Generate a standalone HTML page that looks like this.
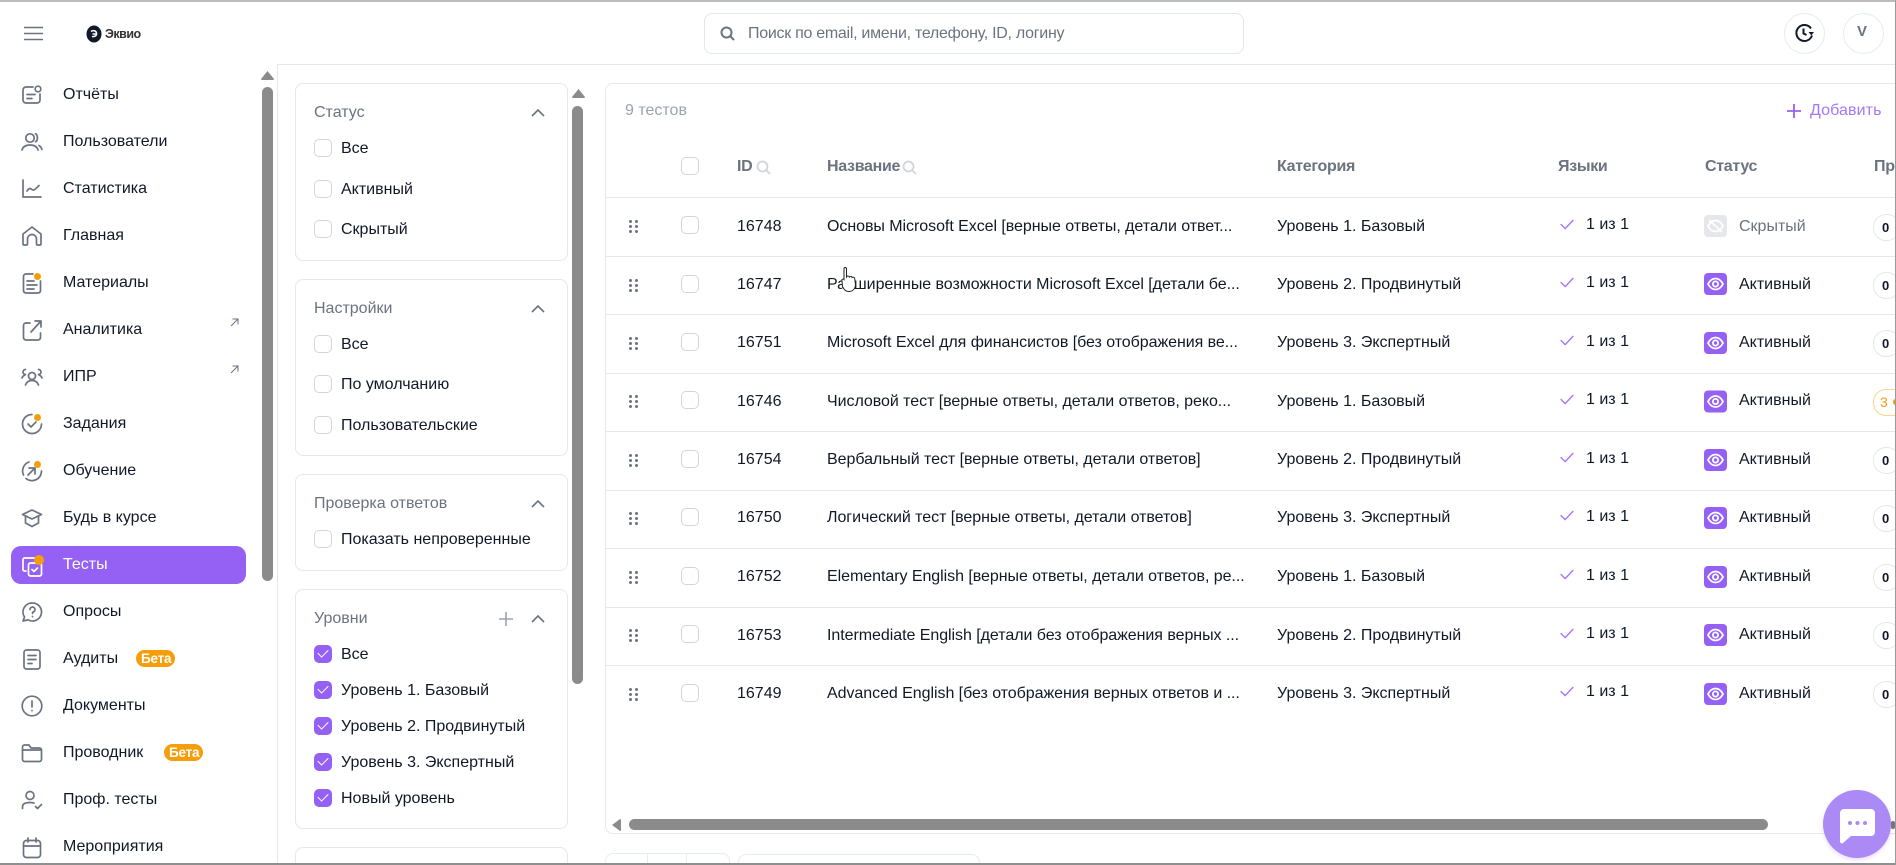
<!DOCTYPE html>
<html lang="ru"><head><meta charset="utf-8"><title>Тесты</title>
<style>
html,body{margin:0;padding:0;background:#fff;width:1896px;height:865px;overflow:hidden}
#r{position:relative;width:1896px;height:865px;overflow:hidden;font-family:"Liberation Sans",sans-serif;font-size:16px;color:#111827}
.a,.t,.cb,.ck,.p,svg{position:absolute}
.t{white-space:nowrap;line-height:20px;margin-top:1px}
.cb,.ck{width:16px;height:16px;border:1px solid #d4d4e0;border-radius:5px;background:#fff;margin-top:-1px}
.ck{background:#9561f5;border-color:#9561f5}
.ck:after{content:"";position:absolute;left:3px;top:3px;width:9px;height:5px;border-left:1.6px solid #fff;border-bottom:1.6px solid #fff;transform:rotate(-45deg)}
.p{left:295px;width:271px;border:1px solid #e5e7eb;border-radius:8px;background:#fff}
.g{color:#6b7280}
.h{color:#6b7280;font-weight:bold;letter-spacing:-.3px}
.ln{position:absolute;left:606px;width:1290px;height:1px;background:#e5e7eb}
.sb{position:absolute;background:#8b8b8b;border-radius:6px}
.beta{position:absolute;height:17px;line-height:17px;background:#f59e0b;color:#fff;font-weight:bold;font-size:13.5px;border-radius:9px;padding:0 5px;width:29px;text-align:center;letter-spacing:-.2px}
.ic{fill:none;stroke:#6b7280;stroke-width:1.7;stroke-linecap:round;stroke-linejoin:round}
.dot{position:absolute;width:7px;height:7px;background:#f59e0b;border-radius:50%}
.pill{position:absolute;left:1873px;width:25px;height:25px;border:1px solid #e5e7eb;border-radius:13px;background:#fff;font-size:13px;font-weight:bold;line-height:25px;text-indent:8px;box-sizing:content-box}
.nm{letter-spacing:-.05px}
.e{margin-top:-1px}
</style></head><body><div id="r">
<svg width="0" height="0" style="position:absolute"><defs>
<symbol id="eye" viewBox="0 0 23 22"><rect width="23" height="22" rx="4" fill="#9561f5"/><path d="M4 11c2-3.800 4.500-5.500 7.500-5.500S17 7.200 19 11c-2 3.800-4.500 5.500-7.500 5.500S6 14.800 4 11z" fill="none" stroke="#fff" stroke-width="1.800"/><circle cx="11.500" cy="11" r="2.600" fill="none" stroke="#fff" stroke-width="1.800"/></symbol>
<symbol id="chk" viewBox="0 0 15 12"><path d="M1 6l4.500 4.500L14 1.500" fill="none" stroke="#a478f5" stroke-width="1.500" stroke-linecap="round" stroke-linejoin="round"/></symbol>
<symbol id="dr" viewBox="0 0 9 13"><g fill="#6b7280"><circle cx="1.500" cy="1.500" r="1.500"/><circle cx="7.500" cy="1.500" r="1.500"/><circle cx="1.500" cy="6.500" r="1.500"/><circle cx="7.500" cy="6.500" r="1.500"/><circle cx="1.500" cy="11.500" r="1.500"/><circle cx="7.500" cy="11.500" r="1.500"/></g></symbol>
<symbol id="up" viewBox="0 0 14 8"><path d="M1 7l6-6 6 6" fill="none" stroke="#6b7280" stroke-width="1.600"/></symbol>
</defs></svg>

<div class="a" style="left:0;top:0;width:1896px;height:2px;background:#bdbdbd"></div>
<div class="a" style="left:277px;top:64px;width:1619px;height:1px;background:#e5e7eb"></div>
<div class="a" style="left:277px;top:64px;width:1px;height:800px;background:#e5e7eb"></div>

<!-- header -->
<svg style="left:24px;top:26px" width="19" height="15" viewBox="0 0 19 15"><path d="M0 1.500h19M0 7.500h19M0 13.500h19" stroke="#6b7280" stroke-width="1.600"/></svg>
<svg style="left:86px;top:25px" width="16" height="18" viewBox="0 0 16 18"><ellipse cx="8" cy="9" rx="7.500" ry="8.500" fill="#111827"/><path d="M5 6.500c2-1.500 5-1 5.500 1.500S9 12 6 11.500M6.500 9h3.500" fill="none" stroke="#fff" stroke-width="1.500"/></svg>
<div class="t" style="left:105px;top:23px;font-size:12.500px;font-weight:bold;letter-spacing:-.5px;color:#333">Эквио</div>
<div class="a" style="left:704px;top:13px;width:538px;height:39px;border:1px solid #e0e7ee;border-radius:8px"></div>
<svg style="left:720px;top:26px" width="15" height="15" viewBox="0 0 15 15"><circle cx="6.500" cy="6.500" r="5" fill="none" stroke="#6b7280" stroke-width="2"/><path d="M10 10l4 4" stroke="#6b7280" stroke-width="2"/></svg>
<div class="t g" style="left:748px;top:23px;letter-spacing:-.28px">Поиск по email, имени, телефону, ID, логину</div>
<div class="a" style="left:1784px;top:13px;width:39px;height:39px;border:1px solid #e5edf0;border-radius:50%"></div>
<svg style="left:1794px;top:23px" width="21" height="20" viewBox="0 0 21 20"><path d="M18 12.500A8 8 0 1 1 17 5.500" fill="none" stroke="#111827" stroke-width="2"/><path d="M9.500 5.500v5l3 1.500" fill="none" stroke="#111827" stroke-width="2"/><path d="M14.500 9h5.500l-2.700 3.500z" fill="#111827"/></svg>
<div class="a" style="left:1843px;top:13px;width:39px;height:39px;border:1px solid #e5edf0;border-radius:50%"></div>
<div class="t g" style="left:1857px;top:21px;font-weight:bold;font-size:15px">V</div>

<!-- sidebar -->
<div class="a" style="left:11px;top:546px;width:235px;height:38px;background:#9561f5;border-radius:10px"></div>
<div class="t" style="left:63px;top:84px">Отчёты</div>
<div class="t" style="left:63px;top:131px">Пользователи</div>
<div class="t" style="left:63px;top:178px">Статистика</div>
<div class="t" style="left:63px;top:225px">Главная</div>
<div class="t" style="left:63px;top:272px">Материалы</div>
<div class="t" style="left:63px;top:319px">Аналитика</div>
<div class="t" style="left:63px;top:366px">ИПР</div>
<div class="t" style="left:63px;top:413px">Задания</div>
<div class="t" style="left:63px;top:460px">Обучение</div>
<div class="t" style="left:63px;top:507px">Будь в курсе</div>
<div class="t" style="left:63px;top:554px;color:#fff">Тесты</div>
<div class="t" style="left:63px;top:601px">Опросы</div>
<div class="t" style="left:63px;top:648px">Аудиты</div>
<div class="beta" style="left:136px;top:650px">Бета</div>
<div class="t" style="left:63px;top:695px">Документы</div>
<div class="t" style="left:63px;top:742px">Проводник</div>
<div class="beta" style="left:164px;top:744px">Бета</div>
<div class="t" style="left:63px;top:789px">Проф. тесты</div>
<div class="t" style="left:63px;top:836px">Мероприятия</div>

<svg class="ic" style="left:21px;top:84px" width="22" height="22" viewBox="0 0 22 22"><path d="M12 3H5a3 3 0 0 0-3 3v10a3 3 0 0 0 3 3h11a3 3 0 0 0 3-3v-6"/><circle cx="17" cy="5" r="2.800"/><path d="M6 10.500h8M6 14.500h5"/></svg>
<svg class="ic" style="left:21px;top:132px" width="22" height="20" viewBox="0 0 22 20"><circle cx="9" cy="6" r="4.200"/><path d="M1 18c1-3.500 4-5 8-5s7 1.500 8 5M14.500 1.800c2.500 1 2.500 7 0 8M18 13.500c1.500.8 2.500 2.500 3 4"/></svg>
<svg class="ic" style="left:21px;top:178px" width="22" height="22" viewBox="0 0 22 22"><path d="M2 2v17h18M6 13c2-3 3-3 5-1.500s3 0 7-4"/></svg>
<svg class="ic" style="left:21px;top:225px" width="22" height="22" viewBox="0 0 22 22"><path d="M3 20h2.500a1 1 0 0 0 1-1v-5a4.500 4.500 0 0 1 9 0v5a1 1 0 0 0 1 1H19a1 1 0 0 0 1-1V9L11 2 2 9v10a1 1 0 0 0 1 1z"/></svg>
<svg class="ic" style="left:21px;top:272px" width="22" height="22" viewBox="0 0 22 22"><path d="M12 2H5a2.500 2.500 0 0 0-2.500 2.500v14A2.500 2.500 0 0 0 5 21h12a2.500 2.500 0 0 0 2.500-2.500V9"/><path d="M6 9h7M6 13h10M6 17h7"/></svg>
<div class="dot" style="left:34px;top:273px"></div>
<svg class="ic" style="left:21px;top:319px" width="22" height="22" viewBox="0 0 22 22"><path d="M9 4H5a2.500 2.500 0 0 0-2.500 2.500v12A2.500 2.500 0 0 0 5 21h12a2.500 2.500 0 0 0 2.500-2.500V14M10 13L20 2M14 2h6v6"/></svg>
<svg style="left:230px;top:318px" width="9" height="9" viewBox="0 0 9 9"><path d="M1 8l7-7M2.500 1H8v5.500" fill="none" stroke="#6b7280" stroke-width="1"/></svg>
<svg style="left:230px;top:365px" width="9" height="9" viewBox="0 0 9 9"><path d="M1 8l7-7M2.500 1H8v5.500" fill="none" stroke="#6b7280" stroke-width="1"/></svg>
<svg class="ic" style="left:21px;top:367px" width="22" height="20" viewBox="0 0 22 20"><circle cx="11" cy="9" r="3.500"/><path d="M4.500 18c1-3 3.500-4.500 6.500-4.500s5.500 1.500 6.500 4.500M4.500 2.500a2.500 2.500 0 0 0 0 5M1 11c.5-1.500 1.500-2.500 3-3M17.500 2.500a2.500 2.500 0 0 1 0 5M21 11c-.5-1.500-1.500-2.500-3-3"/></svg>
<svg class="ic" style="left:21px;top:413px" width="22" height="22" viewBox="0 0 22 22"><path d="M20.500 11A9.500 9.500 0 1 1 11 1.500M7 11l3 3 5-5"/></svg>
<div class="dot" style="left:34px;top:414px"></div>
<svg class="ic" style="left:21px;top:460px" width="22" height="22" viewBox="0 0 22 22"><path d="M20.500 11A9.500 9.500 0 0 1 5 18.500M2.500 15A9.500 9.500 0 0 1 8 2M7 15l7-7M8 8h6v6"/></svg>
<div class="dot" style="left:34px;top:461px"></div>
<svg class="ic" style="left:21px;top:508px" width="22" height="20" viewBox="0 0 22 20"><path d="M11 2L1.500 6.500 11 11l9.500-4.500zM4.500 8.500V15l6.500 3.500 6.500-3.500V8.500"/></svg>
<svg style="left:21px;top:556px" width="22" height="22" viewBox="0 0 22 22" fill="none" stroke="#fff" stroke-width="1.700" stroke-linecap="round" stroke-linejoin="round"><rect x="7.500" y="7" width="13" height="13" rx="2"/><path d="M5 15H3.500A1.500 1.500 0 0 1 2 13.500v-10A1.500 1.500 0 0 1 3.500 2h10A1.500 1.500 0 0 1 15 3.500V5M11 13.500l2 2 3.500-3.500"/></svg>
<div class="dot" style="left:34px;top:555px;width:8px;height:8px;border:1px solid #f59e0b"></div>
<svg class="ic" style="left:21px;top:601px" width="22" height="22" viewBox="0 0 22 22"><path d="M11.500 2a9 9 0 1 1-4.500 16.800L2 20l1.500-4A9 9 0 0 1 11.500 2z"/><path d="M9 8.500a2.500 2.500 0 1 1 3.500 2.300c-.8.400-1 .9-1 1.700"/><path d="M11.500 15.500v.1"/></svg>
<svg class="ic" style="left:21px;top:648px" width="22" height="22" viewBox="0 0 22 22"><rect x="3" y="2" width="16" height="19" rx="2.500"/><path d="M7 7.500h8M7 11.500h8M7 15.500h4"/></svg>
<svg class="ic" style="left:21px;top:695px" width="22" height="22" viewBox="0 0 22 22"><circle cx="11" cy="11" r="9.800"/><path d="M11 6v6M11 15.500v.1"/></svg>
<svg class="ic" style="left:21px;top:743px" width="22" height="20" viewBox="0 0 22 20"><path d="M1.500 4a2 2 0 0 1 2-2h4.500l2 3h8.500a2 2 0 0 1 2 2v9.500a2 2 0 0 1-2 2h-15a2 2 0 0 1-2-2z"/><path d="M1.500 7h18"/></svg>
<svg class="ic" style="left:21px;top:790px" width="22" height="20" viewBox="0 0 22 20"><circle cx="9" cy="5.500" r="4"/><path d="M1.500 18.500v-1.500c0-3 2-4.500 7.500-4.500 1.500 0 3 .2 4 .6M14.500 16.500l2 2 4-4"/></svg>
<svg class="ic" style="left:21px;top:837px" width="22" height="22" viewBox="0 0 22 22"><rect x="2.500" y="3.500" width="17" height="17" rx="3"/><path d="M7 1v4M15 1v4M2.500 9h17"/></svg>

<svg style="left:261px;top:71px" width="13" height="9" viewBox="0 0 13 9"><path d="M6.500 0L13 8a1 1 0 0 1-1 1H1a1 1 0 0 1-1-1z" fill="#8b8b8b"/></svg>
<div class="sb" style="left:262px;top:87px;width:11px;height:494px"></div>

<!-- filters -->
<div class="p" style="top:83px;height:176px"></div>
<div class="t g" style="left:314px;top:102px">Статус</div>
<svg style="left:531px;top:109px" width="14" height="8"><use href="#up"/></svg>
<div class="cb" style="left:314px;top:140px"></div><div class="t" style="left:341px;top:138px">Все</div>
<div class="cb" style="left:314px;top:181px"></div><div class="t" style="left:341px;top:179px">Активный</div>
<div class="cb" style="left:314px;top:221px"></div><div class="t" style="left:341px;top:219px">Скрытый</div>

<div class="p" style="top:279px;height:175px"></div>
<div class="t g" style="left:314px;top:298px">Настройки</div>
<svg style="left:531px;top:305px" width="14" height="8"><use href="#up"/></svg>
<div class="cb" style="left:314px;top:336px"></div><div class="t" style="left:341px;top:334px">Все</div>
<div class="cb" style="left:314px;top:376px"></div><div class="t" style="left:341px;top:374px">По умолчанию</div>
<div class="cb" style="left:314px;top:417px"></div><div class="t" style="left:341px;top:415px">Пользовательские</div>

<div class="p" style="top:474px;height:95px"></div>
<div class="t g" style="left:314px;top:493px">Проверка ответов</div>
<svg style="left:531px;top:500px" width="14" height="8"><use href="#up"/></svg>
<div class="cb" style="left:314px;top:531px"></div><div class="t" style="left:341px;top:529px">Показать непроверенные</div>

<div class="p" style="top:589px;height:238px"></div>
<div class="t g" style="left:314px;top:608px">Уровни</div>
<svg style="left:499px;top:612px" width="14" height="14" viewBox="0 0 14 14"><path d="M7 0v14M0 7h14" stroke="#9ca3af" stroke-width="1.600"/></svg>
<svg style="left:531px;top:615px" width="14" height="8"><use href="#up"/></svg>
<div class="ck" style="left:314px;top:646px"></div><div class="t" style="left:341px;top:644px">Все</div>
<div class="ck" style="left:314px;top:682px"></div><div class="t" style="left:341px;top:680px">Уровень 1. Базовый</div>
<div class="ck" style="left:314px;top:718px"></div><div class="t" style="left:341px;top:716px">Уровень 2. Продвинутый</div>
<div class="ck" style="left:314px;top:754px"></div><div class="t" style="left:341px;top:752px">Уровень 3. Экспертный</div>
<div class="ck" style="left:314px;top:790px"></div><div class="t" style="left:341px;top:788px">Новый уровень</div>

<div class="p" style="top:847px;height:40px"></div>

<svg style="left:572px;top:89px" width="13" height="9" viewBox="0 0 13 9"><path d="M6.500 0L13 8a1 1 0 0 1-1 1H1a1 1 0 0 1-1-1z" fill="#8b8b8b"/></svg>
<div class="sb" style="left:572px;top:106px;width:11px;height:578px"></div>

<!-- table -->
<div class="a" style="left:605px;top:83px;width:1300px;height:751px;border:1px solid #e5e7eb;border-radius:8px;box-sizing:border-box"></div>
<div class="t" style="left:625px;top:100px;color:#9ca3af">9 тестов</div>
<svg style="left:1787px;top:104px" width="14" height="14" viewBox="0 0 14 14"><path d="M7 0v14M0 7h14" stroke="#9561f5" stroke-width="1.800"/></svg>
<div class="t" style="left:1810px;top:100px;color:#a478f5;letter-spacing:.1px">Добавить</div>

<div class="cb" style="left:681px;top:158px"></div>
<div class="t h" style="left:737px;top:156px">ID</div>
<svg style="left:756px;top:160px" width="15" height="15" viewBox="0 0 15 15"><circle cx="6.500" cy="6.500" r="5" fill="none" stroke="#d1d5db" stroke-width="1.800"/><path d="M10 10l4 4" stroke="#d1d5db" stroke-width="1.800"/></svg>
<div class="t h" style="left:827px;top:156px">Название</div>
<svg style="left:902px;top:160px" width="15" height="15" viewBox="0 0 15 15"><circle cx="6.500" cy="6.500" r="5" fill="none" stroke="#d1d5db" stroke-width="1.800"/><path d="M10 10l4 4" stroke="#d1d5db" stroke-width="1.800"/></svg>
<div class="t h" style="left:1277px;top:156px">Категория</div>
<div class="t h" style="left:1558px;top:156px">Языки</div>
<div class="t h" style="left:1705px;top:156px">Статус</div>
<div class="t h" style="left:1874px;top:156px">Пр</div>

<div class="ln" style="top:197px"></div>
<div class="ln" style="top:256px"></div>
<div class="ln" style="top:314px"></div>
<div class="ln" style="top:373px"></div>
<div class="ln" style="top:431px"></div>
<div class="ln" style="top:490px"></div>
<div class="ln" style="top:548px"></div>
<div class="ln" style="top:607px"></div>
<div class="ln" style="top:665px"></div>

<!-- row 1 -->
<svg style="left:629px;top:220px" width="9" height="13"><use href="#dr"/></svg>
<div class="cb" style="left:681px;top:217px"></div>
<div class="t" style="left:737px;top:216px">16748</div>
<div class="t nm" style="left:827px;top:216px">Основы Microsoft Excel [верные ответы, детали ответ...</div>
<div class="t" style="left:1277px;top:216px">Уровень 1. Базовый</div>
<svg style="left:1560px;top:219px" width="14" height="11"><use href="#chk"/></svg>
<div class="t" style="left:1586px;top:214px">1 из 1</div>
<svg class="e" style="left:1704px;top:216px" width="23" height="22" viewBox="0 0 23 22"><rect width="23" height="22" rx="4" fill="#e5e7eb"/><path d="M4 11c2-3.800 4.500-5.500 7.500-5.500S17 7.200 19 11c-2 3.800-4.500 5.500-7.500 5.500S6 14.800 4 11zM5 5l13 12" fill="none" stroke="#fff" stroke-width="1.800"/></svg>
<div class="t g" style="left:1739px;top:216px">Скрытый</div>
<div class="pill" style="top:214px">0</div>
<!-- row 2 -->
<svg style="left:629px;top:279px" width="9" height="13"><use href="#dr"/></svg>
<div class="cb" style="left:681px;top:276px"></div>
<div class="t" style="left:737px;top:274px">16747</div>
<div class="t nm" style="left:827px;top:274px">Расширенные возможности Microsoft Excel [детали бе...</div>
<div class="t" style="left:1277px;top:274px">Уровень 2. Продвинутый</div>
<svg style="left:1560px;top:277px" width="14" height="11"><use href="#chk"/></svg>
<div class="t" style="left:1586px;top:272px">1 из 1</div>
<svg class="e" style="left:1704px;top:274px" width="23" height="22"><use href="#eye"/></svg>
<div class="t" style="left:1739px;top:274px">Активный</div>
<div class="pill" style="top:272px">0</div>
<svg style="left:841px;top:267px" width="16" height="26" viewBox="0 0 16 26"><path d="M3 2c0-2 2.500-2 2.500 0v8c1-1.500 2.500-1 2.800 0 1-1 2.500-.8 2.700.5 1-.7 2.500-.3 2.700 1l.8 6c.2 3-2 7-6.500 7-3.500 0-5-2-6.500-5L1 14c-.8-1.500 1-2.700 2-1.500z" fill="#fff" stroke="#222" stroke-width="1"/></svg>
<!-- row 3 -->
<svg style="left:629px;top:337px" width="9" height="13"><use href="#dr"/></svg>
<div class="cb" style="left:681px;top:334px"></div>
<div class="t" style="left:737px;top:332px">16751</div>
<div class="t nm" style="left:827px;top:332px">Microsoft Excel для финансистов [без отображения ве...</div>
<div class="t" style="left:1277px;top:332px">Уровень 3. Экспертный</div>
<svg style="left:1560px;top:335px" width="14" height="11"><use href="#chk"/></svg>
<div class="t" style="left:1586px;top:331px">1 из 1</div>
<svg class="e" style="left:1704px;top:333px" width="23" height="22"><use href="#eye"/></svg>
<div class="t" style="left:1739px;top:332px">Активный</div>
<div class="pill" style="top:330px">0</div>
<!-- row 4 -->
<svg style="left:629px;top:395px" width="9" height="13"><use href="#dr"/></svg>
<div class="cb" style="left:681px;top:392px"></div>
<div class="t" style="left:737px;top:391px">16746</div>
<div class="t nm" style="left:827px;top:391px">Числовой тест [верные ответы, детали ответов, реко...</div>
<div class="t" style="left:1277px;top:391px">Уровень 1. Базовый</div>
<svg style="left:1560px;top:394px" width="14" height="11"><use href="#chk"/></svg>
<div class="t" style="left:1586px;top:389px">1 из 1</div>
<svg class="e" style="left:1704px;top:391px" width="23" height="23"><use href="#eye"/></svg>
<div class="t" style="left:1739px;top:390px">Активный</div>
<div class="pill" style="top:389px;color:#f59e0b;border-color:#fcd58a;width:40px;text-indent:6px;font-weight:normal;font-size:14px">3</div>
<div class="dot" style="left:1893px;top:399px;width:5px;height:6px"></div>
<!-- row 5 -->
<svg style="left:629px;top:454px" width="9" height="13"><use href="#dr"/></svg>
<div class="cb" style="left:681px;top:451px"></div>
<div class="t" style="left:737px;top:449px">16754</div>
<div class="t nm" style="left:827px;top:449px">Вербальный тест [верные ответы, детали ответов]</div>
<div class="t" style="left:1277px;top:449px">Уровень 2. Продвинутый</div>
<svg style="left:1560px;top:452px" width="14" height="11"><use href="#chk"/></svg>
<div class="t" style="left:1586px;top:448px">1 из 1</div>
<svg class="e" style="left:1704px;top:450px" width="23" height="22"><use href="#eye"/></svg>
<div class="t" style="left:1739px;top:449px">Активный</div>
<div class="pill" style="top:447px">0</div>
<!-- row 6 -->
<svg style="left:629px;top:512px" width="9" height="13"><use href="#dr"/></svg>
<div class="cb" style="left:681px;top:509px"></div>
<div class="t" style="left:737px;top:507px">16750</div>
<div class="t nm" style="left:827px;top:507px">Логический тест [верные ответы, детали ответов]</div>
<div class="t" style="left:1277px;top:507px">Уровень 3. Экспертный</div>
<svg style="left:1560px;top:510px" width="14" height="11"><use href="#chk"/></svg>
<div class="t" style="left:1586px;top:506px">1 из 1</div>
<svg class="e" style="left:1704px;top:508px" width="23" height="22"><use href="#eye"/></svg>
<div class="t" style="left:1739px;top:507px">Активный</div>
<div class="pill" style="top:505px">0</div>
<!-- row 7 -->
<svg style="left:629px;top:571px" width="9" height="13"><use href="#dr"/></svg>
<div class="cb" style="left:681px;top:568px"></div>
<div class="t" style="left:737px;top:566px">16752</div>
<div class="t nm" style="left:827px;top:566px">Elementary English [верные ответы, детали ответов, ре...</div>
<div class="t" style="left:1277px;top:566px">Уровень 1. Базовый</div>
<svg style="left:1560px;top:569px" width="14" height="11"><use href="#chk"/></svg>
<div class="t" style="left:1586px;top:565px">1 из 1</div>
<svg class="e" style="left:1704px;top:567px" width="23" height="22"><use href="#eye"/></svg>
<div class="t" style="left:1739px;top:566px">Активный</div>
<div class="pill" style="top:564px">0</div>
<!-- row 8 -->
<svg style="left:629px;top:629px" width="9" height="13"><use href="#dr"/></svg>
<div class="cb" style="left:681px;top:626px"></div>
<div class="t" style="left:737px;top:625px">16753</div>
<div class="t nm" style="left:827px;top:625px">Intermediate English [детали без отображения верных ...</div>
<div class="t" style="left:1277px;top:625px">Уровень 2. Продвинутый</div>
<svg style="left:1560px;top:628px" width="14" height="11"><use href="#chk"/></svg>
<div class="t" style="left:1586px;top:623px">1 из 1</div>
<svg class="e" style="left:1704px;top:625px" width="23" height="22"><use href="#eye"/></svg>
<div class="t" style="left:1739px;top:624px">Активный</div>
<div class="pill" style="top:622px">0</div>
<!-- row 9 -->
<svg style="left:629px;top:688px" width="9" height="13"><use href="#dr"/></svg>
<div class="cb" style="left:681px;top:685px"></div>
<div class="t" style="left:737px;top:683px">16749</div>
<div class="t nm" style="left:827px;top:683px">Advanced English [без отображения верных ответов и ...</div>
<div class="t" style="left:1277px;top:683px">Уровень 3. Экспертный</div>
<svg style="left:1560px;top:686px" width="14" height="11"><use href="#chk"/></svg>
<div class="t" style="left:1586px;top:681px">1 из 1</div>
<svg class="e" style="left:1704px;top:684px" width="23" height="22"><use href="#eye"/></svg>
<div class="t" style="left:1739px;top:683px">Активный</div>
<div class="pill" style="top:681px">0</div>

<!-- h-scroll -->
<svg style="left:612px;top:819px" width="9" height="12" viewBox="0 0 9 12"><path d="M0 6L8 0a1 1 0 0 1 1 1v10a1 1 0 0 1-1 1z" fill="#8b8b8b"/></svg>
<div class="sb" style="left:629px;top:819px;width:1139px;height:11px"></div>
<div class="a" style="left:1891px;top:821px;width:4px;height:8px;background:#777;border-radius:4px"></div>

<!-- pagination -->
<div class="a" style="left:605px;top:853px;width:123px;height:30px;border:1px solid #e5edf0;border-radius:8px"></div>
<div class="a" style="left:647px;top:853px;width:1px;height:30px;background:#e5edf0"></div>
<div class="a" style="left:686px;top:853px;width:1px;height:30px;background:#e5edf0"></div>
<div class="a" style="left:738px;top:854px;width:240px;height:30px;border:1px solid #e5edf0;border-radius:8px"></div>

<!-- window frame -->
<div class="a" style="left:0;top:863px;width:1896px;height:2px;background:#8f8f8f"></div>
<div class="a" style="left:1895px;top:0;width:1px;height:865px;background:#9a9a9a"></div>

<!-- chat -->
<div class="a" style="left:1823px;top:790px;width:68px;height:68px;border-radius:50%;background:#ab8af6;box-shadow:0 2px 4px rgba(149,97,245,.2)"></div>
<svg style="left:1840px;top:809px" width="35" height="35" viewBox="0 0 35 35"><path d="M4 0h27a4 4 0 0 1 4 4v19a4 4 0 0 1-4 4H11l-8 7a2 2 0 0 1-3-1V4a4 4 0 0 1 4-4z" fill="#fff"/><circle cx="10" cy="14" r="2" fill="#ab8af6"/><circle cx="17.500" cy="14" r="2" fill="#ab8af6"/><circle cx="25" cy="14" r="2" fill="#ab8af6"/></svg>
</div></body></html>
